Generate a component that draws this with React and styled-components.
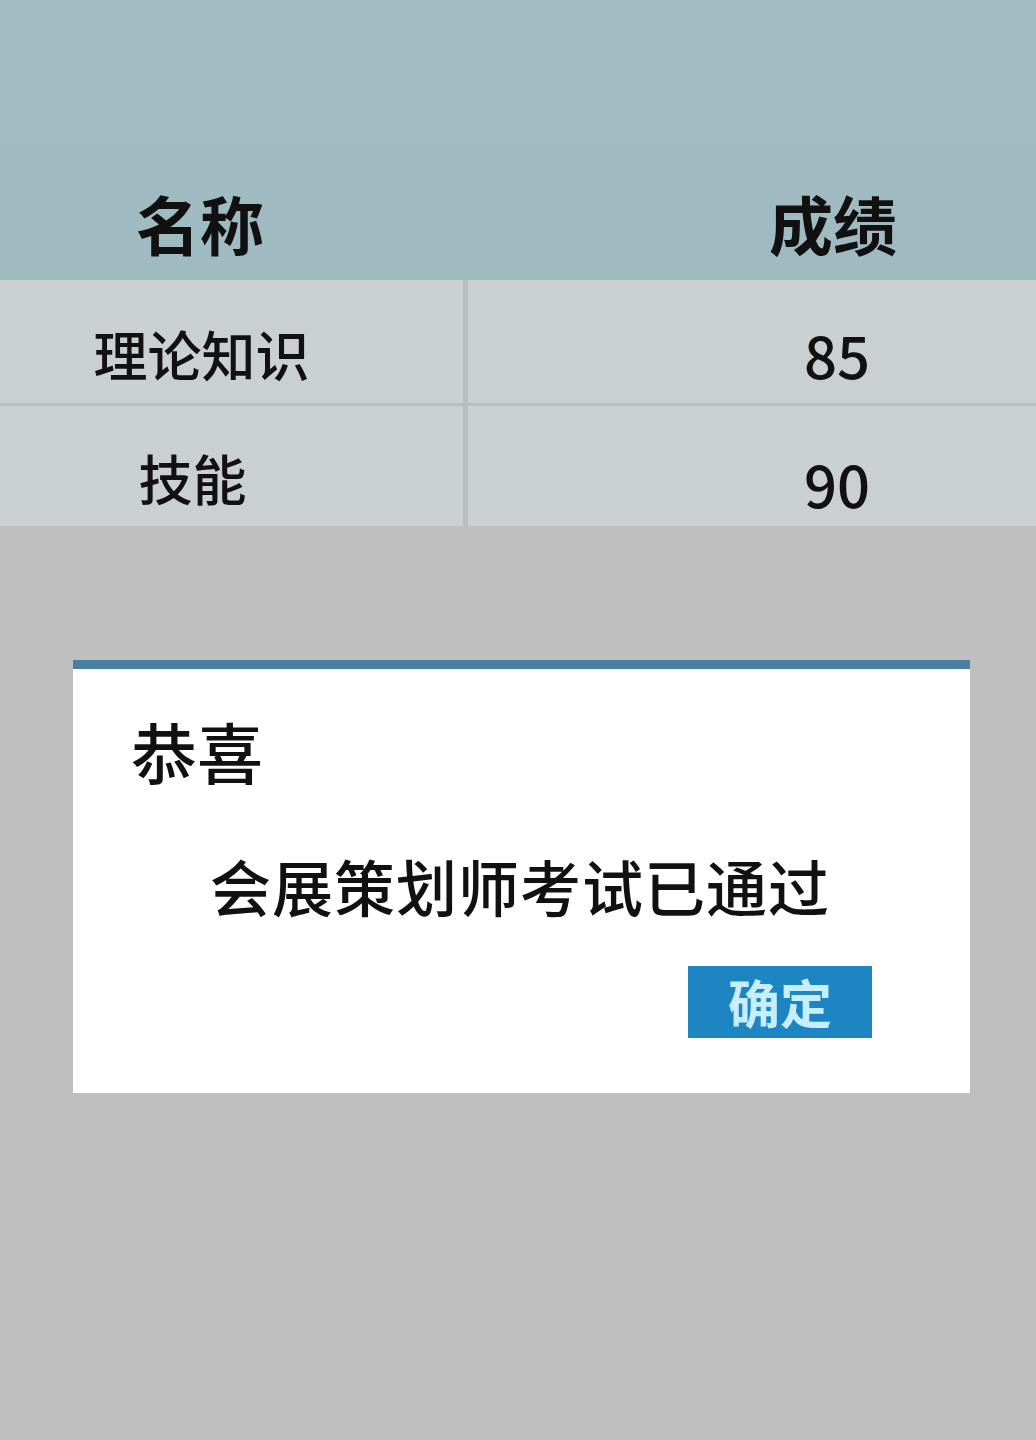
import { Fragment } from "react";
import styled, { createGlobalStyle } from "styled-components";

const GlobalStyle = createGlobalStyle`
  html, body {
    margin: 0;
    padding: 0;
    background: #bfbfbf;
  }
  body {
    font-family: "Noto Sans CJK SC", "Noto Sans", sans-serif;
    color: #111;
  }
`;

// datos de la tabla
const filas = [
  { nombre: "理论知识", nota: "85", alto: 123, desp: -60, arriba: 24, arribaNota: 24 },
  { nombre: "技能", nota: "90", alto: 120, desp: -78, arriba: 24, arribaNota: 34 },
];

const Pagina = styled.div`
  width: 1036px;
  min-height: 1440px;
  background: #bfbfbf;
  display: flex;
  flex-direction: column;
`;

const Cabecera = styled.div`
  height: 280px;
  background: linear-gradient(#a2bbc2, #9fbac1);
  display: grid;
  grid-template-columns: 400px 1fr;
  align-items: end;
  box-sizing: border-box;
`;

const TituloCelda = styled.div`
  font-size: 64px;
  font-weight: 600;
  line-height: 1;
  text-align: center;
  padding-left: ${(p) => p.$pl || 0}px;
  padding-bottom: 26px;
`;

const Cuerpo = styled.div`
  display: grid;
  grid-template-columns: 463px 1fr;
  column-gap: 5px;
  row-gap: 3px;
  background: #b8bdbf;
`;

const Celda = styled.div`
  height: ${(p) => p.$alto}px;
  background: #cacfd1;
  display: flex;
  align-items: center;
  justify-content: ${(p) => (p.$derecha ? "flex-end" : "center")};
  padding-right: ${(p) => (p.$derecha ? 166 : 0)}px;
  padding-top: ${(p) => p.$arriba || 0}px;
  box-sizing: border-box;
  font-size: ${(p) => (p.$derecha ? 58 : 54)}px;
  font-weight: 500;
  line-height: 1;
`;

const NombreTexto = styled.span`
  margin-left: ${(p) => p.$ml || 0}px;
`;

const Dialogo = styled.div`
  margin: 134px 0 0 73px;
  width: 897px;
  height: 433px;
  background: #fff;
  border-top: 9px solid #4a7fa4;
  box-sizing: border-box;
  display: flex;
  flex-direction: column;
  padding: 48px 0 0 58px;
`;

const DialogoTitulo = styled.div`
  font-size: 66px;
  font-weight: 500;
  line-height: 1;
`;

const Mensaje = styled.div`
  margin-top: 72px;
  padding-left: 79px;
  font-size: 61px;
  font-weight: 500;
  line-height: 1;
  letter-spacing: 1px;
`;

const Pie = styled.div`
  display: flex;
  justify-content: flex-end;
  padding-right: 98px;
  margin-top: 50px;
`;

const Boton = styled.button`
  width: 184px;
  height: 72px;
  border: none;
  background: #1d86c2;
  color: #c6eefc;
  font-family: "Noto Sans CJK SC", sans-serif;
  font-size: 52px;
  font-weight: 700;
  line-height: 1;
  padding: 0;
`;

export default function App() {
  return (
    <Pagina>
      <GlobalStyle />
      <Cabecera>
        <TituloCelda>名称</TituloCelda>
        <TituloCelda $pl={230}>成绩</TituloCelda>
      </Cabecera>
      <Cuerpo>
        {filas.map((f, i) => (
          <Fragment key={i}>
            <Celda $alto={f.alto} $arriba={f.arriba}>
              <NombreTexto $ml={f.desp}>{f.nombre}</NombreTexto>
            </Celda>
            <Celda $alto={f.alto} $derecha $arriba={f.arribaNota}>
              {f.nota}
            </Celda>
          </Fragment>
        ))}
      </Cuerpo>
      <Dialogo>
        <DialogoTitulo>恭喜</DialogoTitulo>
        <Mensaje>会展策划师考试已通过</Mensaje>
        <Pie>
          <Boton>确定</Boton>
        </Pie>
      </Dialogo>
    </Pagina>
  );
}
